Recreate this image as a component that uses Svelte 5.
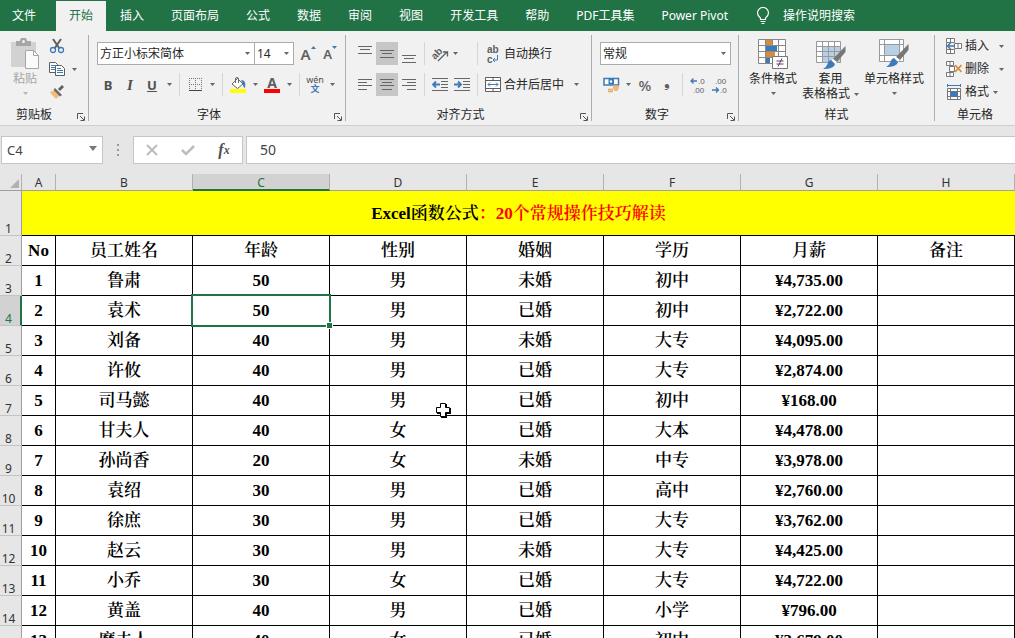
<script lang="ts">
  interface Employee {
    name: string;
    age: number;
    sex: string;
    marriage: string;
    degree: string;
    salary: string;
  }

  const tabs = ['文件', '开始', '插入', '页面布局', '公式', '数据', '审阅', '视图', '开发工具', '帮助', 'PDF工具集', 'Power Pivot'];
  const columns = ['A', 'B', 'C', 'D', 'E', 'F', 'G', 'H'];
  const headings = ['No', '员工姓名', '年龄', '性别', '婚姻', '学历', '月薪', '备注'];

  const employees: Employee[] = [
    { name: '鲁肃', age: 50, sex: '男', marriage: '未婚', degree: '初中', salary: '¥4,735.00' },
    { name: '袁术', age: 50, sex: '男', marriage: '已婚', degree: '初中', salary: '¥2,722.00' },
    { name: '刘备', age: 40, sex: '男', marriage: '未婚', degree: '大专', salary: '¥4,095.00' },
    { name: '许攸', age: 40, sex: '男', marriage: '已婚', degree: '大专', salary: '¥2,874.00' },
    { name: '司马懿', age: 40, sex: '男', marriage: '已婚', degree: '初中', salary: '¥168.00' },
    { name: '甘夫人', age: 40, sex: '女', marriage: '已婚', degree: '大本', salary: '¥4,478.00' },
    { name: '孙尚香', age: 20, sex: '女', marriage: '未婚', degree: '中专', salary: '¥3,978.00' },
    { name: '袁绍', age: 30, sex: '男', marriage: '已婚', degree: '高中', salary: '¥2,760.00' },
    { name: '徐庶', age: 30, sex: '男', marriage: '已婚', degree: '大专', salary: '¥3,762.00' },
    { name: '赵云', age: 30, sex: '男', marriage: '未婚', degree: '大专', salary: '¥4,425.00' },
    { name: '小乔', age: 30, sex: '女', marriage: '已婚', degree: '大专', salary: '¥4,722.00' },
    { name: '黄盖', age: 40, sex: '男', marriage: '已婚', degree: '小学', salary: '¥796.00' },
    { name: '糜夫人', age: 40, sex: '女', marriage: '已婚', degree: '初中', salary: '¥3,679.00' }
  ];

  let activeTab = $state('开始');
  let selectedRow = $state(4);
  let selectedAge = $derived(employees[selectedRow - 3].age);
</script>

{#snippet caret()}
  <svg class="caret" width="5" height="3" viewBox="0 0 5 3"><path d="M0 0h5L2.5 3z" fill="currentColor" /></svg>
{/snippet}

{#snippet more(label: string)}
  <button class="drop" aria-label={label}>{@render caret()}</button>
{/snippet}

{#snippet launcher(label: string)}
  <button class="launcher" aria-label={label}>
    <svg width="8" height="8" viewBox="0 0 8 8" fill="none" stroke="#555"><path d="M.5 6V.5H6M3 3l4 4M7.5 3.5v4h-4" /></svg>
  </button>
{/snippet}

{#snippet lines(rows: number[][])}
  <svg width="14" height="18" viewBox="0 0 14 18" stroke="#666">
    {#each rows as [x1, x2, y]}
      <path d="M{x1} {y}.5H{x2}" />
    {/each}
  </svg>
{/snippet}

<div class="app">
  <nav class="tabs">
    {#each tabs as tab}
      <button class="tab" class:active={tab === activeTab} onclick={() => (activeTab = tab)}>{tab}</button>
    {/each}
    <button class="tell-me">
      <svg width="14" height="18" viewBox="0 0 14 18" fill="none" stroke="#fff" stroke-width="1.2">
        <path d="M4.5 12.5v-1.4C3 9.8 1.5 8.3 1.5 6A5.4 5.4 0 0 1 12.5 6C12.5 8.3 11 9.8 9.5 11.1v1.4zM4.5 14.5h5M5.5 16.5h3" />
      </svg>
      操作说明搜索
    </button>
  </nav>

  <div class="ribbon">
    <section class="group clipboard">
      <div class="body">
        <button class="big paste">
          <svg width="30" height="32" viewBox="0 0 30 32">
            <path d="M1 4h25v25H1z" fill="#d2d2d2" />
            <path d="M6 3h4a3.5 3.5 0 0 1 7 0h4v5H6z" fill="#a6a6a6" />
            <circle cx="13.5" cy="3.5" r="1.5" fill="#f1f1f1" />
            <path d="M15.5 12.5h8l5 5v13h-13z" fill="#fafafa" stroke="#a6a6a6" />
            <path d="M23.5 12.5v5h5" fill="none" stroke="#a6a6a6" />
          </svg>
          <span>粘贴</span>
          {@render caret()}
        </button>
        <div class="stack">
          <div class="row">
            <button class="tool" aria-label="剪切">
              <svg width="16" height="16" viewBox="0 0 16 16" fill="none">
                <path d="M4 1l6.5 9.5M12 1L5.5 10.5" stroke="#5e5e5e" stroke-width="2" />
                <circle cx="4" cy="12" r="2.5" stroke="#3d7ab8" stroke-width="1.3" />
                <circle cx="12" cy="12" r="2.5" stroke="#3d7ab8" stroke-width="1.3" />
              </svg>
            </button>
          </div>
          <div class="row">
            <button class="tool" aria-label="复制">
              <svg width="16" height="16" viewBox="0 0 16 16" fill="#fff" stroke="#5e5e5e">
                <path d="M.5 1.5h6l2 2v8h-8z" /><path d="M2 4.5h4M2 6.5h4M2 8.5h4" stroke="#3d7ab8" />
                <path d="M6.5 4.5h6l3 3v7h-9z" /><path d="M8 7.5h4M8 9.5h6M8 11.5h6" stroke="#3d7ab8" />
              </svg>
            </button>
            {@render more('复制选项')}
          </div>
          <div class="row">
            <button class="tool" aria-label="格式刷">
              <svg width="16" height="16" viewBox="0 0 16 16">
                <path d="M1 8l5-2 5 5-4 4c-1-2-4-3-6-7z" fill="#efbd76" />
                <path d="M6 4l7 7-2 1.500L4.500 6z" fill="#6a6a6a" />
                <path d="M9 5l4-4 2 2-4 4z" fill="#5e5e5e" />
              </svg>
            </button>
          </div>
        </div>
      </div>
      <footer>剪贴板{@render launcher('剪贴板选项')}</footer>
    </section>

    <section class="group font">
      <div class="body rows">
        <div class="row">
          <select class="family" aria-label="字体"><option>方正小标宋简体</option></select>
          <select class="size" aria-label="字号"><option>14</option></select>
          <button class="tool letter grow" aria-label="增大字号">A<svg width="5" height="3" viewBox="0 0 5 3"><path d="M0 3h5L2.5 0z" fill="#3d7ab8" /></svg></button>
          <button class="tool letter shrink" aria-label="减小字号">A<svg width="5" height="3" viewBox="0 0 5 3"><path d="M0 0h5L2.5 3z" fill="#3d7ab8" /></svg></button>
        </div>
        <div class="row">
          <button class="tool bold">B</button>
          <button class="tool italic">I</button>
          <button class="tool underline">U</button>
          {@render more('下划线选项')}
          <span class="sep"></span>
          <button class="tool" aria-label="边框">
            <svg width="13" height="13" viewBox="0 0 13 13" fill="none" stroke="#777">
              <path d="M.5 0v12M6.500 0v12M12.500 0v12M0 .5h13M0 6.500h13" stroke-dasharray="1 1" />
              <path d="M0 12.500h13" stroke="#444" />
            </svg>
          </button>
          {@render more('边框选项')}
          <span class="sep"></span>
          <button class="tool" aria-label="填充颜色">
            <svg width="16" height="16" viewBox="0 0 16 16">
              <path d="M7.5 1.500l5.500 5.500-5.500 4.500L2 7z" fill="#fff" stroke="#666" />
              <path d="M5.500 6V2a1.500 1.500 0 0 1 3 0v4" fill="none" stroke="#666" />
              <path d="M11 3c4 0 5 3 4 8-1.500-1-2-2-2-4z" fill="#3d7ab8" />
              <path d="M0 12h16v4H0z" fill="#ff0" />
            </svg>
          </button>
          {@render more('填充颜色选项')}
          <button class="tool font-color" aria-label="字体颜色"><span>A</span></button>
          {@render more('字体颜色选项')}
          <span class="sep"></span>
          <button class="tool phonetic"><span>wén</span><span class="hanzi">文</span></button>
          {@render more('拼音选项')}
        </div>
      </div>
      <footer>字体{@render launcher('字体设置')}</footer>
    </section>

    <section class="group align">
      <div class="body rows">
        <div class="row">
          <button class="tool" aria-label="顶端对齐">{@render lines([[0, 14, 1], [2, 12, 4], [0, 14, 8]])}</button>
          <button class="tool on" aria-label="垂直居中">{@render lines([[0, 14, 5], [2, 12, 8], [0, 14, 12]])}</button>
          <button class="tool" aria-label="底端对齐">{@render lines([[0, 14, 10], [2, 12, 13], [0, 14, 17]])}</button>
          <span class="sep"></span>
          <button class="tool wide" aria-label="方向">
            <svg class="glyphs" width="18" height="16" viewBox="0 0 18 16">
              <text x="0" y="11" transform="rotate(-45 5 9)">ab</text>
              <path d="M6 15L15 6M11 6h4.500v4.500" fill="none" stroke="#5e5e5e" stroke-width="1.300" />
            </svg>
            {@render caret()}
          </button>
          <span class="sep"></span>
          <button class="command">
            <svg class="glyphs" width="16" height="20" viewBox="0 0 16 20">
              <text x="2" y="9">ab</text>
              <text x="2" y="19">c</text>
              <path d="M12.500 11v5H8M10 14l-2 2 2 2" fill="none" stroke="#3d7ab8" />
            </svg>
            自动换行
          </button>
        </div>
        <div class="row">
          <button class="tool" aria-label="左对齐">{@render lines([[0, 14, 3], [0, 9, 6], [0, 14, 9], [0, 9, 13]])}</button>
          <button class="tool on" aria-label="居中">{@render lines([[0, 14, 3], [2, 12, 6], [0, 14, 9], [2, 12, 13]])}</button>
          <button class="tool" aria-label="右对齐">{@render lines([[0, 14, 3], [5, 14, 6], [0, 14, 9], [5, 14, 13]])}</button>
          <span class="sep"></span>
          <button class="tool" aria-label="减少缩进量">
            <svg width="16" height="13" viewBox="0 0 16 13" fill="none">
              <path d="M0 .5h16M9 3.500h7M9 6.500h7M9 9.500h7M0 12.500h16" stroke="#666" />
              <path d="M8 6.500H1M4 3.500l-3 3 3 3" stroke="#3d7ab8" stroke-width="1.800" />
            </svg>
          </button>
          <button class="tool" aria-label="增加缩进量">
            <svg width="16" height="13" viewBox="0 0 16 13" fill="none">
              <path d="M0 .5h16M9 3.500h7M9 6.500h7M9 9.500h7M0 12.500h16" stroke="#666" />
              <path d="M0 6.500h7M4 3.500l3 3-3 3" stroke="#3d7ab8" stroke-width="1.800" />
            </svg>
          </button>
          <span class="sep"></span>
          <button class="command">
            <svg width="16" height="15" viewBox="0 0 16 15" fill="#fff" stroke="#5e5e5e">
              <path d="M.5 .5h15v14H.5zM.5 3.500h15M.5 11.500h15M8 .5v3M8 11.500v3" />
              <path d="M3 7.500h10M5 5.500l-2 2 2 2M11 5.500l2 2-2 2" fill="none" stroke="#3d7ab8" />
            </svg>
            合并后居中
          </button>
          {@render more('合并选项')}
        </div>
      </div>
      <footer>对齐方式{@render launcher('对齐设置')}</footer>
    </section>

    <section class="group number">
      <div class="body rows">
        <div class="row">
          <select class="format" aria-label="数字格式"><option>常规</option></select>
        </div>
        <div class="row">
          <button class="tool" aria-label="会计数字格式">
            <svg width="17" height="16" viewBox="0 0 17 16">
              <path d="M1 1.500h14.500v6.500H1z" fill="#fff" stroke="#3d7ab8" stroke-width="1.500" />
              <path d="M5.500 2h5.500v5.500H5.500z" fill="#3d7ab8" />
              <circle cx="8" cy="4.500" r="1.200" fill="#fff" />
              <path d="M10 9h6M10 11h6M5 12.500h5M5 14.500h5M11 13h4" stroke="#e7a95a" stroke-width="1.500" />
            </svg>
          </button>
          {@render more('会计格式选项')}
          <button class="tool percent">%</button>
          <button class="tool comma">❟</button>
          <span class="sep"></span>
          <button class="tool" aria-label="增加小数位数">
            <svg class="glyphs decimals" width="16" height="18" viewBox="0 0 16 18">
              <path d="M7 5H1M3.500 2.500L1 5l2.500 2.500" fill="none" stroke="#3d7ab8" stroke-width="1.300" />
              <text x="8" y="8">.0</text>
              <text x="3" y="17">.00</text>
            </svg>
          </button>
          <button class="tool" aria-label="减少小数位数">
            <svg class="glyphs decimals" width="16" height="18" viewBox="0 0 16 18">
              <text x="3" y="8">.00</text>
              <text x="8" y="17">.0</text>
              <path d="M0 14h6.500M4 11.500L6.500 14 4 16.500" fill="none" stroke="#3d7ab8" stroke-width="1.300" />
            </svg>
          </button>
        </div>
      </div>
      <footer>数字{@render launcher('数字设置')}</footer>
    </section>

    <section class="group styles">
      <div class="body">
        <button class="big">
          <svg width="30" height="32" viewBox="0 0 30 32">
            <path d="M.5 1.500h27v24H.5z" fill="#fff" />
            <path d="M8 2h6v6H8zM8 14h9v6H8z" fill="#d98a3c" />
            <path d="M8 8h11v6H8zM8 20h4v6H8z" fill="#3d7ab8" />
            <path d="M.5 1.500h27v24H.5zM.5 7.500h27M.5 13.500h27M.5 19.500h27M7.500 1.500v24M14.500 1.500v6M20.500 1.500v18" fill="none" stroke="#888" />
            <path d="M14.500 18.500h15v12h-15z" fill="#fff" stroke="#777" />
            <path d="M18.500 23h7M18.500 26h7M24 20.500l-4 8" stroke="#663a70" />
          </svg>
          <span>条件格式</span>
          {@render caret()}
        </button>
        <button class="big">
          <svg width="30" height="32" viewBox="0 0 30 32">
            <path d="M.5 3.500h24v21H.5z" fill="#fff" /><path d="M7 9h18v16H7z" fill="#b8d0e6" />
            <path d="M.5 3.500h24v21H.5zM.5 8.500h24M.5 13.500h24M.5 18.500h24M6.500 3.500v21M12.500 3.500v21M18.500 3.500v21" fill="none" stroke="#999" />
            <path d="M29.500 8v6L21 24l-4-3z" fill="#777" /><path d="M17 21l4 3-2 2-4-3z" fill="#fff" />
            <path d="M15 22l4 4c-1 4-6 5-12 5 5-2 4-8 8-9z" fill="#3d7ab8" />
          </svg>
          <span>套用</span>
          <span class="last">表格格式 {@render caret()}</span>
        </button>
        <button class="big">
          <svg width="30" height="32" viewBox="0 0 30 32">
            <path d="M.5 1.500h24v22H.5z" fill="#fff" /><path d="M6 7h15v10H6z" fill="#b8d0e6" />
            <path d="M.5 1.500h24v22H.5zM.5 6.500h24M.5 17.500h24M5.500 1.500v22M20.500 1.500v22" fill="none" stroke="#999" />
            <path d="M29.500 6v6L21 22l-4-3z" fill="#777" /><path d="M17 19l4 3-2 2-4-3z" fill="#fff" />
            <path d="M15 20l4 4c-1 4-6 5-12 5 5-2 4-8 8-9z" fill="#3d7ab8" />
          </svg>
          <span>单元格样式</span>
          {@render caret()}
        </button>
      </div>
      <footer>样式</footer>
    </section>

    <section class="group cells">
      <div class="body">
        <div class="stack">
          <div class="row">
            <button class="command">
              <svg width="16" height="16" viewBox="0 0 16 16" fill="#fff" stroke="#777">
                <path d="M.5 .5h8v4h-8zM4.500 .5v4M.5 11.500h8v4h-8zM4.500 11.500v4M.5 4.500v7M8.500 5.500h7v5h-7zM12 5.500v5" />
                <path d="M9 8H1.500M4.500 5l-3 3 3 3" fill="none" stroke="#3d7ab8" stroke-width="1.500" />
              </svg>
              插入
            </button>
            {@render more('插入选项')}
          </div>
          <div class="row">
            <button class="command">
              <svg width="16" height="16" viewBox="0 0 16 16" fill="#fff" stroke="#777">
                <path d="M.5 .5h7v4h-7zM4 .5v4M3.500 5.500h5v5h-5zM.5 11.500h7v4h-7zM4 11.500v4" />
                <path d="M9 4l6.500 7M15.500 4L9 11" stroke="#d98a3c" stroke-width="1.800" />
              </svg>
              删除
            </button>
            {@render more('删除选项')}
          </div>
          <div class="row format-row">
            <button class="command">
              <svg width="16" height="16" viewBox="0 0 16 16" fill="#fff" stroke="#777">
                <path d="M1.500 4.500h13v11h-13zM1.500 7.500h13M1.500 12.500h13M4.500 4.500v11M11.500 4.500v11" />
                <path d="M5 8h6v4H5z" fill="#3d7ab8" stroke="#3d7ab8" />
                <path d="M1.500 0v3M14.500 0v3M2 1.500h12" stroke="#3d7ab8" />
              </svg>
              格式
            </button>
            {@render more('格式选项')}
          </div>
        </div>
      </div>
      <footer>单元格</footer>
    </section>
  </div>

  <div class="formula-bar">
    <div class="name-box">
      <input aria-label="名称框" value={'C' + selectedRow} />
      <button class="drop" aria-label="名称列表">
        <svg width="8" height="5" viewBox="0 0 8 5"><path d="M0 0h8L4 5z" fill="#777" /></svg>
      </button>
    </div>
    <svg class="dots" width="2" height="12" viewBox="0 0 2 12" fill="#999"><path d="M0 0h2v2H0zM0 5h2v2H0zM0 10h2v2H0z" /></svg>
    <div class="entry">
      <button aria-label="取消"><svg width="12" height="12" viewBox="0 0 12 12"><path d="M1 1l10 10M11 1L1 11" stroke="#bdbdbd" stroke-width="2" /></svg></button>
      <button aria-label="输入"><svg width="14" height="12" viewBox="0 0 14 12" fill="none"><path d="M1 6l4 4 8-8" stroke="#bdbdbd" stroke-width="2.5" /></svg></button>
      <button class="fx" aria-label="插入函数">f<sub>x</sub></button>
    </div>
    <input class="formula" aria-label="编辑栏" value={selectedAge} />
  </div>

  <main class="sheet">
    <table>
      <colgroup>
        <col class="col-head" />
        <col class="col-no" />
        {#each columns.slice(1) as _}<col />{/each}
      </colgroup>
      <thead>
        <tr>
          <th class="corner"><svg width="9" height="9" viewBox="0 0 9 9"><path d="M9 0v9H0z" fill="#b1b1b1" /></svg></th>
          {#each columns as column}
            <th class:current={column === 'C'}>{column}</th>
          {/each}
        </tr>
      </thead>
      <tbody>
        <tr class="title">
          <th>1</th>
          <td colspan="8">Excel函数公式<span>：20个常规操作技巧解读</span></td>
        </tr>
        <tr>
          <th>2</th>
          {#each headings as heading}<td>{heading}</td>{/each}
        </tr>
        {#each employees as person, i}
          <tr>
            <th class:current={i + 3 === selectedRow}>{i + 3}</th>
            <td>{i + 1}</td>
            <td>{person.name}</td>
            <td class:selected={i + 3 === selectedRow} onclick={() => (selectedRow = i + 3)}>
              {person.age}
              {#if i + 3 === selectedRow}<i class="handle"></i>{/if}
            </td>
            <td class:hovered={i === 4}>
              {person.sex}
              {#if i === 4}
                <svg class="pointer" width="16" height="16" viewBox="0 0 16 16">
                  <path d="M6 2h6v4h4v6h-4v4H6v-4H2V6h4z" />
                  <path d="M5.5 1.5h5v4h4v5h-4v4h-5v-4h-4v-5h4z" fill="#fff" stroke="#000" />
                </svg>
              {/if}
            </td>
            <td>{person.marriage}</td>
            <td>{person.degree}</td>
            <td>{person.salary}</td>
            <td></td>
          </tr>
        {/each}
      </tbody>
    </table>
  </main>
</div>

<style>
  :global(body) {
    margin: 0;
    overflow: hidden;
  }

  .app {
    display: flex;
    flex-direction: column;
    height: 100vh;
    overflow: hidden;
    background: #e6e6e6;
    color: #262626;
    font-family: 'Noto Sans', 'Noto Sans CJK SC', sans-serif;
    font-size: 12px;
    line-height: 16px;
  }

  button,
  input,
  select {
    box-sizing: border-box;
    margin: 0;
    padding: 0;
    border: none;
    border-radius: 0;
    background: none;
    color: inherit;
    font: inherit;
  }

  button {
    display: flex;
    align-items: center;
    justify-content: center;
    white-space: nowrap;
  }

  svg {
    display: block;
    flex-shrink: 0;
  }

  /* Tabs */
  .tabs {
    display: flex;
    flex-shrink: 0;
    gap: 1px;
    height: 31px;
    background: #217346;
    color: #fff;
  }

  .tab {
    margin-top: 1px;
    padding: 0 13px;
  }

  .tab:first-child {
    padding: 0 19px 0 12px;
  }

  .tab.active {
    background: #f1f1f1;
    color: #217346;
  }

  .tell-me {
    gap: 13px;
    padding: 0 14px;
  }

  /* Ribbon */
  .ribbon {
    display: flex;
    flex-shrink: 0;
    height: 94px;
    border-bottom: 1px solid #cfcfcf;
    background: #f1f1f1;
  }

  .group {
    display: flex;
    flex-direction: column;
    flex-shrink: 0;
    box-sizing: border-box;
    height: 86px;
    margin-top: 4px;
    border-right: 1px solid #adadad;
  }

  .clipboard {
    width: 89px;
  }

  .font {
    width: 257px;
  }

  .align {
    width: 246px;
  }

  .number {
    width: 147px;
  }

  .styles {
    width: 196px;
  }

  .cells {
    flex: 1;
    border-right: none;
  }

  .body {
    display: flex;
    flex: 1;
    padding-left: 8px;
  }

  .rows {
    flex-direction: column;
    gap: 8px;
    padding-top: 7px;
  }

  .row {
    display: flex;
    align-items: center;
    height: 23px;
  }

  .stack .row {
    height: 22px;
    margin-bottom: 1px;
  }

  footer {
    display: flex;
    position: relative;
    justify-content: center;
    height: 14px;
    line-height: 16px;
  }

  .clipboard footer {
    padding-right: 20px;
  }

  .font footer,
  .align footer,
  .number footer {
    padding-right: 16px;
  }

  .launcher {
    position: absolute;
    right: 3px;
    bottom: 0;
  }

  .tool {
    width: 22px;
    height: 23px;
  }

  .tool.on {
    background: #c6c6c6;
  }

  .tool.wide {
    gap: 3px;
    width: 44px;
    padding-right: 12px;
  }

  .drop {
    width: 12px;
    height: 22px;
  }

  .caret {
    color: #666;
  }

  .sep {
    width: 1px;
    height: 23px;
    margin: 0 4px;
    background: #d5d5d5;
  }

  .command {
    gap: 3px;
    padding: 0 3px;
  }

  .align .command + .drop {
    margin-left: 3px;
  }

  .cells .command + .drop {
    margin-left: 3px;
  }

  .cells .format-row .drop {
    margin-left: -3px;
  }

  .big {
    flex-direction: column;
    justify-content: flex-start;
    padding: 3px 2px 0;
  }

  .big span {
    display: flex;
    align-items: center;
    gap: 4px;
    margin-top: 1px;
  }

  .big .caret {
    margin-top: 5px;
  }

  .big .last {
    margin-top: 0;
    line-height: 14px;
  }

  .big .last .caret {
    margin-top: 0;
  }

  .paste {
    width: 34px;
    color: #a6a6a6;
  }

  .paste .caret {
    color: #b5b5b5;
  }

  .paste + .stack {
    margin-left: 4px;
  }

  .styles .big + .big {
    margin-left: 1px;
  }

  select {
    height: 23px;
    padding: 0 2px;
    border: 1px solid #ababab;
    background: #fff url("data:image/svg+xml;charset=UTF-8,%3csvg xmlns='http://www.w3.org/2000/svg' width='5' height='3'%3e%3cpath d='M0 0h5L2.5 3z' fill='%23666'/%3e%3c/svg%3e") no-repeat right 4px center;
    appearance: none;
  }

  .family {
    width: 158px;
  }

  .size {
    width: 40px;
    margin-left: -1px;
  }

  .format {
    width: 131px;
  }

  .letter {
    color: #5e5e5e;
    font-size: 15px;
    font-weight: 600;
  }

  .letter svg {
    align-self: flex-start;
    margin-top: 4px;
  }

  .grow {
    margin-left: 3px;
  }

  .shrink {
    font-size: 13px;
  }

  .bold,
  .italic,
  .underline {
    color: #505050;
    font-size: 13px;
    font-weight: 700;
    line-height: 14px;
  }

  .italic {
    font-family: 'Liberation Serif', serif;
    font-size: 15px;
    font-style: italic;
  }

  .underline {
    text-decoration: underline;
  }

  .font-color span {
    width: 16px;
    height: 16px;
    box-sizing: border-box;
    border-bottom: 4px solid #f00;
    color: #5e5e5e;
    font-size: 14px;
    font-weight: 700;
    line-height: 12px;
  }

  .phonetic {
    flex-direction: column;
    color: #505050;
    font-size: 9px;
    line-height: 9px;
  }

  .hanzi {
    color: #3d7ab8;
    font-weight: 700;
    line-height: 10px;
  }

  .percent,
  .comma {
    color: #5e5e5e;
    font-size: 15px;
    font-weight: 500;
  }

  .comma {
    align-items: flex-start;
  }

  .glyphs {
    overflow: visible;
  }

  .glyphs text {
    fill: #5e5e5e;
    font-family: 'Liberation Sans', sans-serif;
    font-size: 10px;
    font-weight: 700;
  }

  .decimals text {
    font-size: 8px;
    font-weight: 400;
  }

  /* Formula bar */
  .formula-bar {
    display: flex;
    flex-shrink: 0;
    align-items: center;
    height: 28px;
    padding: 10px 0 10px 1px;
    color: #444;
    font-size: 13px;
  }

  .name-box,
  .entry,
  .formula {
    display: flex;
    box-sizing: border-box;
    height: 28px;
    border: 1px solid #c6c6c6;
    background: #fff;
  }

  .name-box {
    width: 102px;
    padding: 0 3px 0 5px;
  }

  .name-box input {
    flex: 1;
    min-width: 0;
  }

  .dots {
    margin: 0 14px;
  }

  .entry {
    width: 110px;
    margin-right: 3px;
  }

  .entry button {
    flex: 1;
  }

  .fx {
    color: #505050;
    font-family: 'Liberation Serif', serif;
    font-size: 16px;
    font-style: italic;
    font-weight: 700;
  }

  .fx sub {
    font-size: 12px;
  }

  .formula {
    flex: 1;
    min-width: 0;
    padding: 0 0 2px 13px;
    border-right: none;
    font-size: 14px;
  }

  /* Sheet */
  .sheet {
    flex: 1;
    min-height: 0;
    overflow: hidden;
  }

  table {
    width: 100%;
    border-spacing: 0;
    table-layout: fixed;
  }

  .col-head {
    width: 22px;
  }

  .col-no {
    width: 34px;
  }

  th {
    box-sizing: border-box;
    padding: 0;
    border-right: 1px solid #9f9f9f;
    border-bottom: 1px solid #c3c3c3;
    color: #333;
    font-weight: 400;
  }

  thead th {
    height: 17px;
    padding-top: 2px;
    border-right-color: #b1b1b1;
    border-bottom-color: #9f9f9f;
    line-height: 14px;
  }

  thead .current {
    border-bottom: 2px solid #217346;
    background: #d2d2d2;
    color: #217346;
    line-height: 13px;
  }

  .corner svg {
    margin: 1px 2px 1px auto;
  }

  tbody th {
    padding-right: 4px;
    line-height: 12px;
    vertical-align: bottom;
  }

  tbody .current {
    border-right: 2px solid #217346;
    background: #d2d2d2;
    color: #217346;
    padding-right: 3px;
  }

  td {
    box-sizing: border-box;
    height: 30px;
    padding: 0;
    border-right: 1px solid #000;
    border-bottom: 1px solid #000;
    background: #fff;
    color: #000;
    font-family: 'Liberation Serif', 'Noto Serif CJK SC', 'Noto Sans CJK SC', serif;
    font-size: 17px;
    font-weight: 600;
    line-height: 20px;
    text-align: center;
  }

  .title td {
    height: 45px;
    padding-top: 2px;
    border-right: none;
    background: #ff0;
  }

  .title span {
    color: #f00;
  }

  .selected,
  .hovered {
    position: relative;
  }

  .selected::after {
    position: absolute;
    inset: -2px;
    border: 2px solid #217346;
    content: '';
  }

  .handle {
    position: absolute;
    right: -4px;
    bottom: -4px;
    z-index: 1;
    width: 5px;
    height: 5px;
    border: 1px solid #fff;
    background: #217346;
  }

  .pointer {
    position: absolute;
    top: 16px;
    left: 105px;
    z-index: 1;
  }
</style>
